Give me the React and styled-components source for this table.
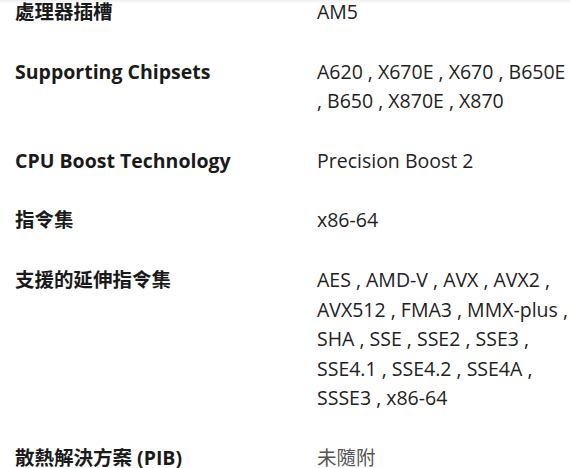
import styled, { createGlobalStyle } from "styled-components";

const GlobalStyle = createGlobalStyle`
  html, body {
    margin: 0;
    padding: 0;
    background: #ffffff;
    overflow: hidden;
  }
`;

const Page = styled.div`
  position: relative;
  width: 570px;
  height: 468px;
  overflow: hidden;
  font-family: "Open Sans", "Noto Sans CJK TC", sans-serif;
`;

const TopShade = styled.div`
  position: absolute;
  top: 0;
  left: 0;
  right: 0;
  height: 4px;
  background: linear-gradient(to bottom, rgba(0, 0, 0, 0.06), rgba(0, 0, 0, 0));
`;

const SpecList = styled.dl`
  margin: -18px 0 0;
  padding: 0;
`;

const SpecRow = styled.div`
  display: grid;
  grid-template-columns: 317px 1fr;
  padding: 15px 0;
  font-size: 19.5px;
  line-height: 29.6px;
`;

const Label = styled.dt`
  margin: 0;
  padding-left: 15px;
  font-weight: 700;
  color: #1a1a1a;
`;

const Value = styled.dd`
  margin: 0;
  color: ${({ $muted }) => ($muted ? "#555555" : "#222222")};
`;

const specs = [
  { label: "處理器插槽", value: "AM5" },
  { label: "Supporting Chipsets", value: "A620 , X670E , X670 , B650E , B650 , X870E , X870" },
  { label: "CPU Boost Technology", value: "Precision Boost 2" },
  { label: "指令集", value: "x86-64" },
  {
    label: "支援的延伸指令集",
    value:
      "AES , AMD-V , AVX , AVX2 , AVX512 , FMA3 , MMX-plus , SHA , SSE , SSE2 , SSE3 , SSE4.1 , SSE4.2 , SSE4A , SSSE3 , x86-64",
  },
  { label: "散熱解決方案 (PIB)", value: "未隨附", muted: true },
];

export default function App() {
  return (
    <Page>
      <GlobalStyle />
      <SpecList>
        {specs.map((s) => (
          <SpecRow key={s.label}>
            <Label>{s.label}</Label>
            <Value $muted={s.muted}>{s.value}</Value>
          </SpecRow>
        ))}
      </SpecList>
      <TopShade />
    </Page>
  );
}
